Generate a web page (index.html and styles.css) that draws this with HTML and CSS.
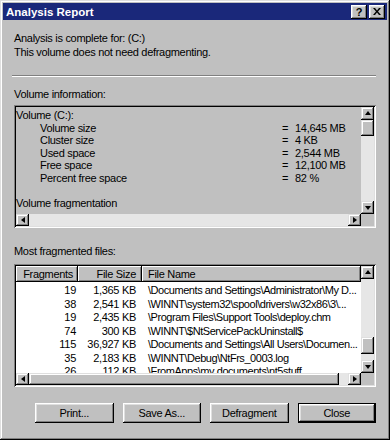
FILE: index.html
```html
<!DOCTYPE html>
<html lang="en">
<head>
  <meta charset="UTF-8">
  <title>Analysis Report</title>
  <link rel="stylesheet" href="styles.css">
</head>
<body>
  <div class="window">
    <div class="titlebar">
      <span class="title">Analysis Report</span>
      <span class="cbtn help">?</span>
      <span class="cbtn close-x">
        <svg width="8" height="7" viewBox="0 0 8 7"><path d="M0 0h2l2 2.5L6 0h2L5 3.5 8 7H6L4 4.5 2 7H0l3-3.5z"/></svg>
      </span>
    </div>

    <div class="dialog">
      <p class="intro">Analysis is complete for: (C:)<br>This volume does not need defragmenting.</p>
      <div class="sep"></div>

      <div class="label">Volume information:</div>
      <div class="sunken volume-box">
        <div class="vb-text">
          <div>Volume (C:):</div>
          <div class="stat"><span>Volume size</span><span>=</span><span>14,645 MB</span></div>
          <div class="stat"><span>Cluster size</span><span>=</span><span>4 KB</span></div>
          <div class="stat"><span>Used space</span><span>=</span><span>2,544 MB</span></div>
          <div class="stat"><span>Free space</span><span>=</span><span>12,100 MB</span></div>
          <div class="stat"><span>Percent free space</span><span>=</span><span>82 %</span></div>
          <div>&nbsp;</div>
          <div>Volume fragmentation</div>
        </div>
        <div class="vscroll">
          <span class="arrow"><i class="tri up"></i></span>
          <span class="thumb v-thumb-top"></span>
          <span class="track"></span>
          <span class="arrow"><i class="tri down"></i></span>
        </div>
        <div class="hscroll">
          <span class="arrow"><i class="tri left"></i></span>
          <span class="track"></span>
          <span class="arrow"><i class="tri right"></i></span>
        </div>
        <div class="corner"></div>
      </div>

      <div class="label files-label">Most fragmented files:</div>
      <div class="sunken list-box">
        <div class="list-main">
          <div class="list-head">
            <span class="col-frag">Fragments</span>
            <span class="col-size">File Size</span>
            <span class="col-name">File Name</span>
          </div>
          <div class="list-rows">
            <div class="row"><span class="col-frag">19</span><span class="col-size">1,365 KB</span><span class="col-name">\Documents and Settings\Administrator\My D...</span></div>
            <div class="row"><span class="col-frag">38</span><span class="col-size">2,541 KB</span><span class="col-name">\WINNT\system32\spool\drivers\w32x86\3\...</span></div>
            <div class="row"><span class="col-frag">19</span><span class="col-size">2,435 KB</span><span class="col-name">\Program Files\Support Tools\deploy.chm</span></div>
            <div class="row"><span class="col-frag">74</span><span class="col-size">300 KB</span><span class="col-name">\WINNT\$NtServicePackUninstall$</span></div>
            <div class="row"><span class="col-frag">115</span><span class="col-size">36,927 KB</span><span class="col-name">\Documents and Settings\All Users\Documen...</span></div>
            <div class="row"><span class="col-frag">35</span><span class="col-size">2,183 KB</span><span class="col-name">\WINNT\Debug\NtFrs_0003.log</span></div>
            <div class="row"><span class="col-frag">26</span><span class="col-size">112 KB</span><span class="col-name">\FromApps\my documents\nt5stuff</span></div>
          </div>
        </div>
        <div class="vscroll">
          <span class="arrow"><i class="tri up"></i></span>
          <span class="track"></span>
          <span class="thumb v-thumb-low"></span>
          <span class="track small"></span>
          <span class="arrow"><i class="tri down"></i></span>
        </div>
        <div class="hscroll">
          <span class="arrow"><i class="tri left"></i></span>
          <span class="thumb h-thumb"></span>
          <span class="track"></span>
          <span class="arrow"><i class="tri right"></i></span>
        </div>
        <div class="corner"></div>
      </div>

      <div class="buttons">
        <button class="btn">Print...</button>
        <button class="btn">Save As...</button>
        <button class="btn">Defragment</button>
        <button class="btn default">Close</button>
      </div>
    </div>
  </div>
</body>
</html>
```

FILE: styles.css
```css
body {
  margin: 0;
  font-family: "Liberation Sans", Arial, sans-serif;
  font-size: 11px;
  letter-spacing: -0.3px;
  color: #000;
}

.window {
  width: 390px;
  height: 440px;
  box-sizing: border-box;
  padding: 3px;
  background: #c0c0c0;
  box-shadow: inset -1px -1px #000, inset 1px 1px #dfdfdf, inset -2px -2px #808080, inset 2px 2px #fff;
  display: flex;
  flex-direction: column;
}

.titlebar {
  height: 17px;
  background: #1a287a;
  display: flex;
  align-items: center;
  padding: 0 2px 0 3px;
}
.title {
  flex: 1;
  color: #fff;
  font-weight: bold;
  font-size: 11.5px;
  letter-spacing: 0;
}
.cbtn {
  width: 16px;
  height: 14px;
  box-sizing: border-box;
  background: #c0c0c0;
  box-shadow: inset -1px -1px #000, inset 1px 1px #fff, inset -2px -2px #808080, inset 2px 2px #dfdfdf;
  display: flex;
  align-items: center;
  justify-content: center;
  font-weight: bold;
  font-size: 11px;
  line-height: 14px;
  letter-spacing: 0;
}
.cbtn + .cbtn {
  margin-left: 2px;
}

.dialog {
  flex: 1;
  padding: 0 11px;
  display: flex;
  flex-direction: column;
}
.intro {
  margin: 11px 0 0;
  line-height: 14px;
}
.sep {
  margin: 16px 0 0 -2px;
  border-top: 1px solid #808080;
  border-bottom: 1px solid #fff;
}
.label {
  margin-top: 11px;
  line-height: 13px;
}
.files-label {
  margin-top: 17px;
}

.sunken {
  box-sizing: border-box;
  padding: 2px;
  box-shadow: inset 1px 1px #808080, inset -1px -1px #fff, inset 2px 2px #000, inset -2px -2px #dfdfdf;
  display: grid;
  grid-template-columns: 1fr 13px;
  grid-template-rows: 1fr 12px;
}

/* volume information box */
.volume-box {
  margin-top: 4px;
  height: 123px;
}
.vb-text {
  padding-top: 2px;
  line-height: 12.6px;
  overflow: hidden;
  white-space: nowrap;
}
.stat {
  display: grid;
  grid-template-columns: 242px 13px auto;
  padding-left: 24px;
}

/* scrollbars */
.vscroll, .hscroll {
  display: flex;
  background: #e6e6e6;
}
.vscroll {
  flex-direction: column;
}
.arrow, .thumb {
  flex: none;
  width: 13px;
  height: 12px;
  box-sizing: border-box;
  background: #c0c0c0;
  box-shadow: inset -1px -1px #000, inset 1px 1px #dfdfdf, inset -2px -2px #808080, inset 2px 2px #fff;
  display: flex;
  align-items: center;
  justify-content: center;
}
.vscroll .arrow {
  height: 13px;
}
.track {
  flex: 1;
}
.track.small {
  flex: none;
  height: 6px;
}
.v-thumb-top {
  height: 16px;
}
.v-thumb-low {
  height: 17px;
}
.h-thumb {
  width: 310px;
  height: 12px;
}
.corner {
  background: #c0c0c0;
}
.tri {
  width: 0;
  height: 0;
  border: 3px solid transparent;
}
.tri.up { border-bottom: 4px solid #000; border-top: 0; margin-top: -1px; }
.tri.down { border-top: 4px solid #000; border-bottom: 0; }
.tri.left { border-right: 4px solid #000; border-left: 0; }
.tri.right { border-left: 4px solid #000; border-right: 0; }

/* file list */
.list-box {
  margin-top: 6px;
  height: 123px;
}
.list-main {
  background: #fff;
  overflow: hidden;
  white-space: nowrap;
}
.list-head {
  display: flex;
  height: 16px;
  line-height: 16px;
}
.list-head span {
  background: #c0c0c0;
  box-shadow: inset -1px -1px #000, inset 1px 1px #fff, inset -2px -2px #808080;
}
.list-rows {
  padding-top: 2px;
}
.row {
  display: flex;
  height: 13.5px;
  line-height: 13.5px;
}
.col-frag {
  flex: none;
  width: 62px;
  box-sizing: border-box;
  text-align: right;
  padding-right: 2px;
}
.col-size {
  flex: none;
  width: 64px;
  box-sizing: border-box;
  text-align: right;
  padding-right: 6px;
}
.col-name {
  flex: 1;
  padding-left: 6px;
  overflow: hidden;
}
.row .col-name {
  letter-spacing: -0.45px;
}
.list-head .col-frag {
  padding-right: 5px;
}

/* buttons */
.buttons {
  margin-top: 16px;
  display: flex;
  justify-content: flex-end;
  gap: 9px;
}
.btn {
  width: 78.5px;
  height: 20px;
  padding: 0;
  border: none;
  background: #c0c0c0;
  font: inherit;
  letter-spacing: -0.3px;
  box-shadow: inset -1px -1px #000, inset 1px 1px #fff, inset -2px -2px #808080, inset 2px 2px #dfdfdf;
}
.btn.default {
  box-shadow: inset 0 0 0 1px #000, inset -2px -2px #000, inset 2px 2px #fff, inset -3px -3px #808080, inset 3px 3px #dfdfdf;
}
```
